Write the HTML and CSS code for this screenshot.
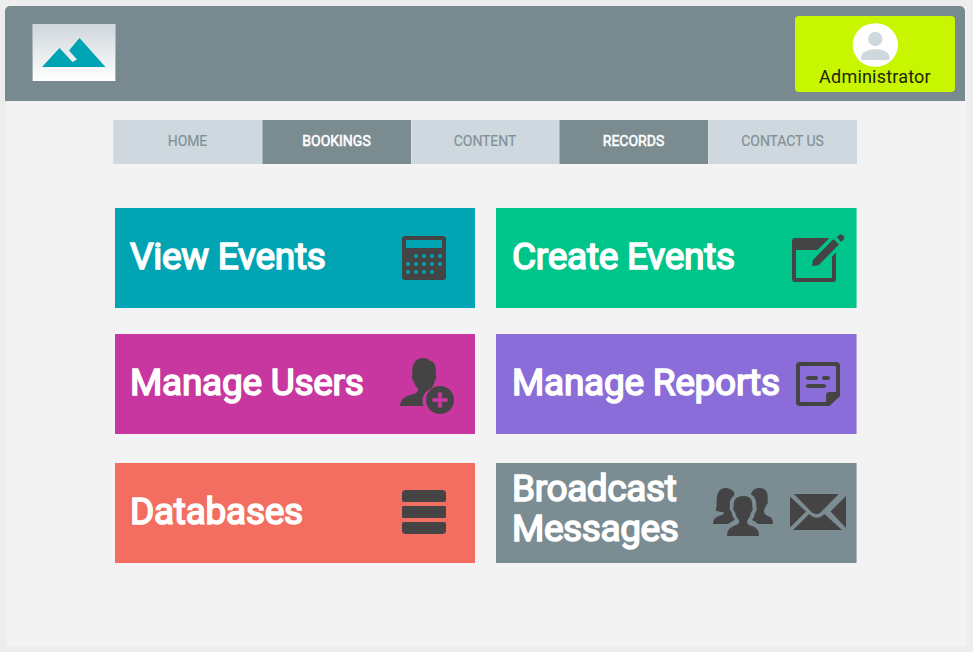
FILE: index.html
```html
<!DOCTYPE html>
<html lang="en">
<head>
<meta charset="utf-8">
<title>Administrator</title>
<link rel="stylesheet" href="styles.css">
</head>
<body>
<div class="page">
  <header class="header">
    <a class="logo" href="#" aria-label="Home">
      <svg width="84" height="57" viewBox="0 0 84 57"><path d="M10 43 27.500 24 40.500 38 45 35.500 37 26.500 47.500 14 73.500 43Z" fill="#00a4b3"/></svg>
    </a>
    <a class="profile" href="#">
      <svg class="avatar" width="46" height="44" viewBox="0 0 46 44"><ellipse cx="23.3" cy="22" rx="22.7" ry="21.800" fill="#fff"/><circle cx="23.3" cy="16" r="7.2" fill="#cfd8dd"/><path d="M9.300 37v-3.500C9.300 29 17 26.300 23.300 26.300S37.300 29 37.300 33.500V37Z" fill="#cfd8dd"/></svg>
      <span class="name">Administrator</span>
    </a>
  </header>
  <nav class="nav">
    <a href="#">HOME</a>
    <a href="#" class="dark">BOOKINGS</a>
    <a href="#">CONTENT</a>
    <a href="#" class="dark">RECORDS</a>
    <a href="#">CONTACT US</a>
  </nav>
  <main class="tiles">
    <a class="tile teal" href="#"><span class="title">View Events</span>
      <svg class="icon" width="85" height="100" viewBox="0 0 85 100">
        <path fill-rule="evenodd" d="M15 28h38a3 3 0 0 1 3 3v38a3 3 0 0 1-3 3H15a3 3 0 0 1-3-3V31a3 3 0 0 1 3-3Zm1 4v8h36v-8Z"/>
        <g class="dots"><circle cx="26" cy="48" r="2"/><circle cx="34" cy="48" r="2"/><circle cx="42" cy="48" r="2"/><circle cx="50" cy="48" r="2"/><circle cx="18" cy="56" r="2"/><circle cx="26" cy="56" r="2"/><circle cx="34" cy="56" r="2"/><circle cx="42" cy="56" r="2"/><circle cx="50" cy="56" r="2"/><circle cx="18" cy="64" r="2"/><circle cx="26" cy="64" r="2"/><circle cx="34" cy="64" r="2"/><circle cx="42" cy="64" r="2"/></g>
      </svg></a>
    <a class="tile wide green" href="#"><span class="title">Create Events</span>
      <svg class="icon" width="85" height="100" viewBox="0 0 85 100">
        <path d="M58.5 30H24a3 3 0 0 0-3 3v38a3 3 0 0 0 3 3h38a3 3 0 0 0 3-3V44.5l-4 4V70H25V42h21.5Z"/>
        <path d="M62.500 31 68 36.500 47.500 57.200 41 58 42 52Z"/>
        <path d="m65.800 29.200 1.800-1.800c2.700-2.700 7.800 1.300 4.600 4.600l-2 2Z"/>
      </svg></a>
    <a class="tile magenta" href="#"><span class="title">Manage Users</span>
      <svg class="icon" width="85" height="100" viewBox="0 0 85 100">
        <path d="M10 72C10.500 65 15 62 22 60.500 26 59.500 29 58 28 54.500 25.500 53 24 49 23.500 46.500 22 46 21.500 42.500 22.500 41 21 31.500 25 24 33 24c3 0 5.500.8 6.800 2.800 4.200.2 6.700 4.500 6 14.200 1 2 .2 5-1 5.800-.3 3-2.300 6.200-3 7.200C35 57 32.500 62.500 32.500 66.500c0 2 .2 3.700.8 5.500Z"/>
        <circle cx="50" cy="66" r="14"/><path class="plus" d="M50 60v12M44 66h12"/>
      </svg></a>
    <a class="tile wide violet" href="#"><span class="title reports">Manage Reports</span>
      <svg class="icon" width="85" height="100" viewBox="0 0 85 100">
        <path fill-rule="evenodd" d="M29 28h36a4 4 0 0 1 4 4v30L58.500 72H29a4 4 0 0 1-4-4V32a4 4 0 0 1 4-4Zm1 4a1 1 0 0 0-1 1v34a1 1 0 0 0 1 1h25v-6.500a3.500 3.500 0 0 1 3.500-3.500H65V33a1 1 0 0 0-1-1Z"/>
        <path class="lines" d="M37 44h8M53 44h4M37 52h16"/>
      </svg></a>
    <a class="tile coral" href="#"><span class="title">Databases</span>
      <svg class="icon" width="85" height="100" viewBox="0 0 85 100">
        <path d="M12 31a4 4 0 0 1 4-4h36a4 4 0 0 1 4 4v6q0 2-2 2H14q-2 0-2-2Z"/><rect x="12" y="43" width="44" height="12" rx="1.500"/><path d="M12 61q0-2 2-2h40q2 0 2 2v6a4 4 0 0 1-4 4H16a4 4 0 0 1-4-4Z"/>
      </svg></a>
    <a class="tile wide slate" href="#"><span class="title cast">Broadcast<br>Messages</span>
      <svg class="icon" width="150" height="100" viewBox="-0.500 0 150 100">
        <path d="M6.500 61c.3-5 2.500-7 6-8 3-1 5.500-1.500 4.500-4-3.500 0-6.500-.5-8-2 1.800-2.500.7-8 1.300-12C11 28 14.500 25 19.500 25c2.800 0 5.500 1.300 7.300 3.300C28.500 30 28 32 26.500 33.500 24 36 23 38.500 23.500 42c-1 2.500 0 5.500 1.500 7 .6 4 2 6 3.500 7.500L21.500 61Z"/>
        <path d="M44.500 31.500C45 27.500 49 25 52.500 25c7.500 0 9.300 5.500 8.500 12 .7 1.500.3 4-1 4.500-.7 2.500-2 4.500-2.500 5.500-.5 3.500 1.500 5 4 6 3.500 1.200 5 3.500 5 8H51.500c-2-2-4-3.200-6-4 1.500-2 2.500-3.500 2.700-6.500 2-1.500 2.300-5.500 1.500-8 .3-5-1.200-9-5.200-11Z"/>
        <path d="M20.500 73c.2-5.500 2.500-8.500 7-10 4-1.200 6-2.500 5-6-2-2-3.500-4.500-4-8-1.800-1-2.300-4.500-1.200-6C26.300 36.500 30.500 33 37 33s9.300 3.500 8.700 10c1 2 .5 5-1 6-.5 3-2 6-3.700 8-1.200 3.500.5 4.800 4 6 5 1.500 7.500 4 7.500 10Z"/>
        <path d="M87.500 31h44.800L114.500 49c-3 2.800-6.500 2.800-9.500 0ZM83.500 33.500v31L99.500 48.500ZM139.500 33v32L124 48.500ZM86.500 67l16.200-16c4.600 4.700 10.800 5 15.300 0L135.500 67Z"/>
      </svg></a>
  </main>
</div>
</body>
</html>
```
FILE: styles.css
```css
* { box-sizing: border-box; }
body { margin: 0; background: #ededed; font-family: Roboto, "Liberation Sans", sans-serif; overflow: hidden; }
a { color: inherit; text-decoration: none; }
svg { display: block; flex: none; }
.page { width: 960px; height: 640px; margin: 6px 0 0 7px; background: #f3f3f3; }
.header { display: flex; justify-content: space-between; width: 960px; height: 95px; margin-left: -2px; padding: 10px 10px 9px 27px; background: #788a8f; border-radius: 5px 5px 0 0; }
.logo { width: 84px; height: 57px; margin-top: 8px; background: linear-gradient(#cfd7db, #fff); border: solid #a9b5ba; border-width: 0 1px; }
.logo svg { margin-left: -1px; }
.profile { width: 160px; height: 76px; padding-top: 7px; display: flex; flex-direction: column; align-items: center; background: #c8f500; border-radius: 4px; }
.name { font-size: 18px; line-height: 20px; color: #1c2600; letter-spacing: .2px; white-space: nowrap; }
.nav { display: grid; grid-template-columns: 149px 149px 148px 149px 149px; height: 44px; width: 744px; margin: 19px 0 0 106px; }
.nav a { display: flex; align-items: center; justify-content: center; padding: 0 1px 3px 0; background: #cfd8de; color: #819297; font-size: 14px; -webkit-text-stroke: .2px #819297; border-left: 1px solid #d9e0e4; letter-spacing: -.1px; }
.nav .dark { background: #7b8c91; color: #fff; -webkit-text-stroke: .5px #fff; border-left-color: #a9b6bb; letter-spacing: 0; }
.tiles { display: grid; grid-template-columns: 360px 361px; grid-template-rows: 100px 100px 100px; column-gap: 21px; row-gap: 26px; margin: 44px 0 0 108px; }
.tile { display: flex; align-items: center; justify-content: space-between; height: 100px; padding-left: 15px; color: #fff; }
.wide { padding-left: 16px; border-right: 1px solid rgba(242, 242, 242, .45); }
.title { font-size: 37px; line-height: 40px; font-weight: 400; letter-spacing: -.27px; -webkit-text-stroke: 1.6px #fff; white-space: nowrap; margin-top: -3px; }
.reports { margin-right: -20px; }
.icon { fill: #444; }
.teal { background: #00a4b3; }
.green { background: #00c58a; }
.magenta { background: #c837a0; }
.violet { background: #8a6dd8; }
.coral { background: #f36e60; margin-top: 3px; }
.slate { background: #7b8c92; margin-top: 3px; }
.cast { margin-top: -9px; letter-spacing: -.4px; }
.dots { fill: #00a4b3; }
.plus, .lines { fill: none; stroke-width: 4; stroke-linecap: round; }
.plus { stroke: #c837a0; }
.lines { stroke: #444; }
```
